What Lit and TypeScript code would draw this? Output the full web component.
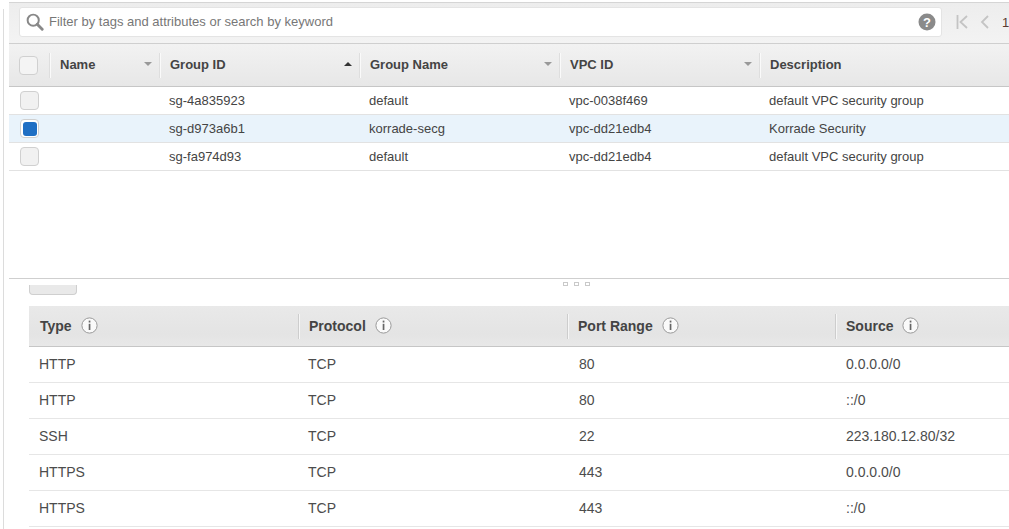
import { LitElement, html, css, svg } from "lit";
import { customElement } from "lit/decorators.js";

const rows = [
  ["sg-4a835923", "default", "vpc-0038f469", "default VPC security group"],
  ["sg-d973a6b1", "korrade-secg", "vpc-dd21edb4", "Korrade Security"],
  ["sg-fa974d93", "default", "vpc-dd21edb4", "default VPC security group"],
];
const rules = [
  ["HTTP", "TCP", "80", "0.0.0.0/0"],
  ["HTTP", "TCP", "80", "::/0"],
  ["SSH", "TCP", "22", "223.180.12.80/32"],
  ["HTTPS", "TCP", "443", "0.0.0.0/0"],
  ["HTTPS", "TCP", "443", "::/0"],
];
const info = html`<svg class="info" viewBox="0 0 17 17" width="17" height="17">
  <circle cx="8.5" cy="8.5" r="7.6" fill="#fafafa" stroke="#9a9a9a" stroke-width="1"></circle>
  <rect x="7.7" y="3.6" width="1.7" height="1.9" fill="#666"></rect>
  <rect x="7.7" y="6.8" width="1.7" height="6.2" fill="#666"></rect>
</svg>`;
const caret = (up = false) =>
  svg`<svg class="caret" viewBox="0 0 8 4" width="8" height="4"><path d="${up ? "M0 4L4 0L8 4Z" : "M0 0L4 4L8 0Z"}" fill="${up ? "#333" : "#999"}"></path></svg>`;

@customElement("app-root")
export class AppRoot extends LitElement {
  static styles = css`
    :host { display: block; width: 1009px; height: 529px; overflow: hidden; background: #fff;
      font-family: "Liberation Sans", Arial, sans-serif; font-size: 13px; color: #444; }
    .page { display: flex; height: 529px; padding-left: 3px; box-sizing: border-box; }
    .rail { width: 1px; margin-top: 9px; background: #dcdcdc; flex: none; }
    .main { width: 1005px; margin-left: 5px; flex: none; display: flex; flex-direction: column; padding-top: 2px; box-sizing: border-box; }
    .toolbar { height: 42px; box-sizing: border-box; flex: none; display: flex; align-items: center; padding: 0 0 2px 10px;
      background: linear-gradient(#ededed, #f3f3f3); border-top: 1px solid #d5d5d5; border-bottom: 1px solid #cfcfcf; }
    .search { width: 923px; height: 30px; box-sizing: border-box; background: #fff; border: 1px solid #e4e4e4; border-radius: 3px;
      display: flex; align-items: center; padding: 0 5px 0 6px; flex: none; color: #777; font-size: 13px; }
    .search .ph { margin-left: 5px; flex: 1; padding-bottom: 1px; }
    .pager { display: flex; align-items: center; margin-left: 14px; color: #5a3a30; }
    .pager .prev { margin-left: 12px; }
    .pager .num { margin-left: 13px; }
    .head, .row { display: grid; grid-template-columns: 40px 110px 200px 200px 200px 1fr; }
    .head { height: 43px; flex: none; box-sizing: border-box; border-bottom: 1px solid #c6c6c6; background: linear-gradient(#f2f2f2, #e7e7e7); }
    .hc { display: flex; align-items: center; justify-content: space-between; padding: 0 7px 3px 10px; font-weight: 700; color: #444; border-left: 1px solid #dedede; box-shadow: inset 1px 0 #fafafa; margin: 9px 0; box-sizing: border-box; height: 25px; }
    .row { height: 28px; box-sizing: border-box; border-bottom: 1px solid #e2e2e2; align-items: center; color: #444; }
    .row.sel { background: #e9f3fb; }
    .row > span { padding-left: 10px; padding-bottom: 1px; }
    .cb { width: 19px; height: 19px; box-sizing: border-box; border: 1px solid #d0d0d0; border-radius: 4px; background: #f1f1f1; margin-left: 11px; display: flex; align-items: center; justify-content: center; }
    .head .cb { margin: 0 0 0 10px; background: #f4f4f4; }
    .cellbox { display: flex; align-items: center; }
    .cb.on { background: #fff; }
    .cb.on i { display: block; width: 14px; height: 14px; background: #1f6fc4; border-radius: 3px; }
    .spacer { height: 108px; flex: none; border-bottom: 1px solid #cfcfcf; box-sizing: border-box; }
    .detail { padding-left: 20px; flex: 1; display: flex; flex-direction: column; position: relative; font-size: 14px; }
    .grip { position: absolute; top: 3px; left: 554px; display: flex; gap: 6px; }
    .grip i { display: block; width: 5px; height: 4px; box-sizing: border-box; border: 1px solid #c9c9c9; }
    .tab { width: 48px; height: 10px; margin-top: 6px; box-sizing: border-box; background: #e9e9e9; border: 1px solid #cfcfcf; border-top: none; border-radius: 0 0 4px 4px; flex: none; }
    .thead, .trow { display: grid; grid-template-columns: 269px 271px 267px 1fr; }
    .thead { margin-top: 11px; height: 41px; box-sizing: border-box; flex: none; grid-template-columns: 269px 269px 268px 1fr; background: linear-gradient(#e9e9e9, #e4e4e4 70%, #e8e8e8); border-bottom: 1px solid #c6c6c6; }
    .th { display: flex; align-items: center; gap: 9px; font-weight: 700; color: #444; height: 25px; margin-top: 8px; padding: 0 0 2px 10px; border-left: 1px solid #cdcdcd; box-shadow: inset 1px 0 #f6f6f6; box-sizing: border-box; }
    .th.first { border-left: none; box-shadow: none; padding-left: 11px; }
    .trow { height: 36px; box-sizing: border-box; border-bottom: 1px solid #e6e6e6; align-items: center; color: #4c4c4c; }
    .trow span { padding-left: 10px; padding-bottom: 1px; }
    .info { flex: none; }
  `;
  render() {
    return html`<div class="page"><div class="rail"></div><div class="main">
      <div class="toolbar">
        <div class="search">
          <svg viewBox="0 0 20 20" width="18" height="18"><circle cx="8" cy="8" r="6.2" fill="none" stroke="#888" stroke-width="2.2"></circle><path d="M12.5 12.5L18 18" stroke="#888" stroke-width="3.2" stroke-linecap="round"></path></svg>
          <span class="ph">Filter by tags and attributes or search by keyword</span>
          <svg viewBox="0 0 18 18" width="18" height="18"><circle cx="9" cy="9" r="8.5" fill="#8a8a8a"></circle><text x="9" y="13.5" font-size="13" font-weight="700" text-anchor="middle" fill="#fff" font-family="Liberation Sans">?</text></svg>
        </div>
        <div class="pager">
          <svg viewBox="0 0 12 14" width="12" height="14"><path d="M1.5 0V14M11 1L4.5 7L11 13" fill="none" stroke="#c4c4c4" stroke-width="1.8"></path></svg>
          <svg class="prev" viewBox="0 0 9 14" width="9" height="14"><path d="M8 1L2 7L8 13" fill="none" stroke="#c4c4c4" stroke-width="1.8"></path></svg>
          <span class="num">1</span>
        </div>
      </div>
      <div class="head">
        <div class="cellbox"><div class="cb"></div></div>
        <div class="hc">Name ${caret()}</div>
        <div class="hc">Group ID ${caret(true)}</div>
        <div class="hc">Group Name ${caret()}</div>
        <div class="hc">VPC ID ${caret()}</div>
        <div class="hc">Description</div>
      </div>
      ${rows.map((r, i) => html`<div class="row ${i === 1 ? "sel" : ""}">
        <div class="cellbox"><div class="cb ${i === 1 ? "on" : ""}">${i === 1 ? html`<i></i>` : ""}</div></div>
        <div></div>
        ${r.map((c) => html`<span>${c}</span>`)}
      </div>`)}
      <div class="spacer"></div>
      <div class="detail">
        <div class="grip"><i></i><i></i><i></i></div>
        <div class="tab"></div>
        <div class="thead">
          ${["Type", "Protocol", "Port Range", "Source"].map((h, i) => html`<div class="th ${i === 0 ? "first" : ""}">${h} ${info}</div>`)}
        </div>
        ${rules.map((r) => html`<div class="trow">${r.map((c) => html`<span>${c}</span>`)}</div>`)}
      </div>
    </div></div>`;
  }
}
